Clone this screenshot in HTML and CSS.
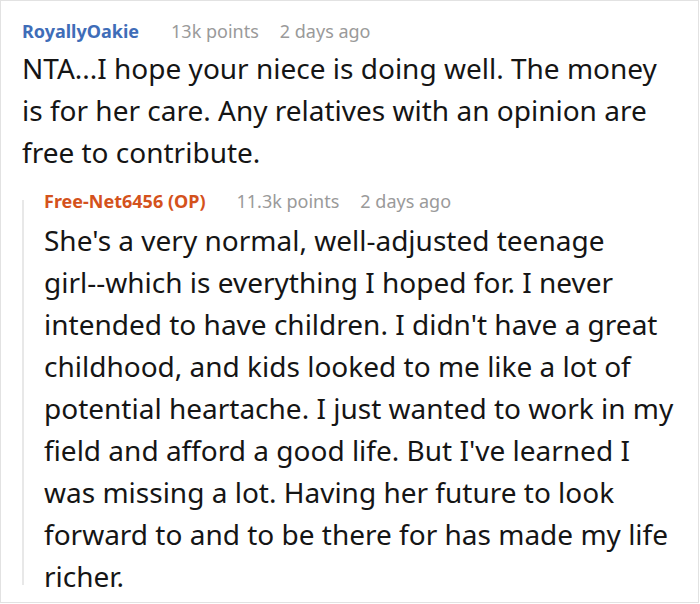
FILE: index.html
```html
<!DOCTYPE html>
<html lang="en">
<head>
<meta charset="utf-8">
<title>Comment thread</title>
<link rel="stylesheet" href="styles.css">
</head>
<body>
<div class="card">
  <div class="comment">
    <div class="meta">
      <span class="author author-blue">RoyallyOakie</span>
      <span class="points">13k points</span>
      <span class="time">2 days ago</span>
    </div>
    <p class="body">NTA...I hope your niece is doing well. The money is for her care. Any relatives with an opinion are free to contribute.</p>
  </div>
  <div class="reply">
    <div class="rail"></div>
    <div class="reply-content">
      <div class="meta">
        <span class="author author-op">Free-Net6456 (OP)</span>
        <span class="points">11.3k points</span>
        <span class="time">2 days ago</span>
      </div>
      <p class="body">She's a very normal, well-adjusted teenage <span class="nowrap">girl--which</span> is everything I hoped for. I never intended to have children. I didn't have a great childhood, and kids looked to me like a lot of potential heartache. I just wanted to work in my field and afford a good life. But I've learned I was missing a lot. Having her future to look forward to and to be there for has made my life richer.</p>
    </div>
  </div>
</div>
</body>
</html>
```

FILE: styles.css
```css
html, body {
  margin: 0;
  padding: 0;
  background: #ffffff;
}

body {
  font-family: "Noto Sans", "Open Sans", sans-serif;
  color: #151515;
}

.card {
  box-sizing: border-box;
  width: 699px;
  height: 603px;
  border: 1px solid #e2e2e2;
  padding: 18px 18px 0 21px;
  overflow: hidden;
}

.meta {
  display: flex;
  align-items: baseline;
  font-size: 18px;
  line-height: 24px;
  white-space: nowrap;
}

.author {
  font-weight: 700;
  margin-right: 32px;
}

.author-blue {
  color: #3f6db8;
}

.author-op {
  color: #d4521c;
  margin-right: 31px;
}

.points,
.time {
  color: #9a9a9a;
}

.points {
  margin-right: 21px;
}

.body {
  margin: 4px 0 0;
  font-size: 28px;
  line-height: 42px;
}

.nowrap {
  white-space: nowrap;
}

.reply {
  display: flex;
  margin-top: 16px;
}

.rail {
  flex: 0 0 2px;
  background: #e8e8e8;
  margin: 11px 0 12px;
}

.reply-content {
  padding-left: 20px;
  flex: 1;
}

.reply-content .body {
  margin-top: 6px;
}
```
